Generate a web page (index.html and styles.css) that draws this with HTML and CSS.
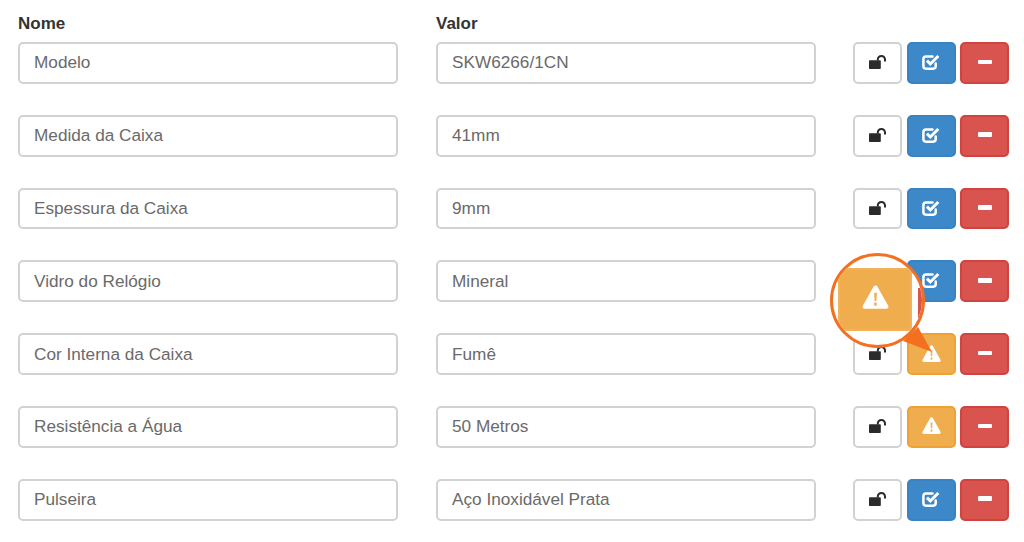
FILE: index.html
```html
<!DOCTYPE html>
<html lang="pt">
<head>
<meta charset="utf-8">
<title>Atributos</title>
<link rel="stylesheet" href="styles.css">
</head>
<body>
<svg class="defs" width="0" height="0" aria-hidden="true">
  <symbol id="i-lock" viewBox="0 0 17 14"><path d="M1 5.200h9.800c.6 0 1 .4 1 1V13c0 .6-.4 1-1 1H1c-.6 0-1-.4-1-1V6.200c0-.6.4-1 1-1z"/><path d="M7.800 5.600V4.500C7.800 2 9.800 0 12.400 0S17 2 17 4.500v2.100h-2V4.600c0-1.400-1.100-2.600-2.600-2.600s-2.600 1.200-2.600 2.600v1z"/></symbol>
  <symbol id="i-check" viewBox="0 0 18 16"><path fill="none" stroke="currentColor" stroke-width="2.500" stroke-linecap="round" d="M13.700 9.500v2.600c0 1.500-1 2.600-2.500 2.600H4c-1.500 0-2.600-1.100-2.600-2.600V5.200c0-1.500 1.100-2.600 2.600-2.600h6.500"/><path fill="none" stroke="currentColor" stroke-width="3" d="M4.900 6.600l3.400 3.400 8-8"/></symbol>
  <symbol id="i-warn" viewBox="0 0 20 18"><path fill-rule="evenodd" d="M10 .3c.6 0 1.100.3 1.400.8l8.100 14.500c.6 1.100-.1 2.300-1.300 2.300H1.800C.6 17.900-.1 16.700.5 15.600L8.600 1.100C8.900.6 9.400.3 10 .3zM9 5.800l.3 6.200h1.400l.3-6.200zM9.100 13.200v2.400h1.800v-2.400z"/></symbol>
</svg>
<form class="sheet">
  <div class="row head">
    <div class="name">Nome</div>
    <div class="name">Valor</div>
    <div></div>
  </div>
  <div class="row">
    <div class="field">Modelo</div>
    <div class="field">SKW6266/1CN</div>
    <div class="actions">
      <span class="btn plain"><svg class="ic-lock"><use href="#i-lock"/></svg></span>
      <span class="btn blue"><svg class="ic-check"><use href="#i-check"/></svg></span>
      <span class="btn red"><i class="minus"></i></span>
    </div>
  </div>
  <div class="row">
    <div class="field">Medida da Caixa</div>
    <div class="field">41mm</div>
    <div class="actions">
      <span class="btn plain"><svg class="ic-lock"><use href="#i-lock"/></svg></span>
      <span class="btn blue"><svg class="ic-check"><use href="#i-check"/></svg></span>
      <span class="btn red"><i class="minus"></i></span>
    </div>
  </div>
  <div class="row">
    <div class="field">Espessura da Caixa</div>
    <div class="field">9mm</div>
    <div class="actions">
      <span class="btn plain"><svg class="ic-lock"><use href="#i-lock"/></svg></span>
      <span class="btn blue"><svg class="ic-check"><use href="#i-check"/></svg></span>
      <span class="btn red"><i class="minus"></i></span>
    </div>
  </div>
  <div class="row">
    <div class="field">Vidro do Relógio</div>
    <div class="field">Mineral</div>
    <div class="actions">
      <span class="btn plain"><svg class="ic-lock"><use href="#i-lock"/></svg></span>
      <span class="btn blue"><svg class="ic-check"><use href="#i-check"/></svg></span>
      <span class="btn red"><i class="minus"></i></span>
    </div>
  </div>
  <div class="row">
    <div class="field">Cor Interna da Caixa</div>
    <div class="field">Fumê</div>
    <div class="actions">
      <span class="btn plain"><svg class="ic-lock"><use href="#i-lock"/></svg></span>
      <span class="btn amber"><svg class="ic-warn"><use href="#i-warn"/></svg></span>
      <span class="btn red"><i class="minus"></i></span>
    </div>
  </div>
  <div class="row">
    <div class="field">Resistência a Água</div>
    <div class="field">50 Metros</div>
    <div class="actions">
      <span class="btn plain"><svg class="ic-lock"><use href="#i-lock"/></svg></span>
      <span class="btn amber"><svg class="ic-warn"><use href="#i-warn"/></svg></span>
      <span class="btn red"><i class="minus"></i></span>
    </div>
  </div>
  <div class="row">
    <div class="field">Pulseira</div>
    <div class="field">Aço Inoxidável Prata</div>
    <div class="actions">
      <span class="btn plain"><svg class="ic-lock"><use href="#i-lock"/></svg></span>
      <span class="btn blue"><svg class="ic-check"><use href="#i-check"/></svg></span>
      <span class="btn red"><i class="minus"></i></span>
    </div>
  </div>
</form>
<div class="callout">
  <svg class="pointer" viewBox="0 0 40 40"><path d="M3 20L18 6L32 31z"/></svg>
  <div class="lens">
    <div class="sliver"></div>
    <div class="big"><svg class="ic-big"><use href="#i-warn"/></svg></div>
  </div>
</div>
</body>
</html>
```
FILE: styles.css
```css
* { box-sizing: border-box; }
html, body { margin: 0; padding: 0; background: #fff; }
body {
  width: 1024px;
  height: 542px;
  overflow: hidden;
  position: relative;
  font-family: "Liberation Sans", Arial, sans-serif;
}
.defs { position: absolute; }
.sheet {
  padding: 13px 15px 0 18px;
  display: flex;
  flex-direction: column;
  gap: 30.900px;
}
.row {
  display: grid;
  grid-template-columns: 380px 380px 155px;
  column-gap: 38px;
  height: 41.900px;
}
.head {
  height: 18px;
  margin-bottom: -19.900px;
}
.name {
  font-size: 17px;
  font-weight: 700;
  line-height: 22px;
  color: #333;
}
.field {
  border: 2px solid #d2d2d2;
  border-radius: 5px;
  padding: 0 14px;
  display: flex;
  align-items: center;
  font-size: 17.200px;
  color: #6a6a6a;
  background: #fff;
}
.actions { display: flex; gap: 4.750px; margin-left: -0.600px; }
.btn {
  width: 48.700px;
  height: 100%;
  border-radius: 5px;
  border: 2px solid;
  display: flex;
  align-items: center;
  justify-content: center;
  padding-bottom: 2px;
}
.plain { background: #fff; border-color: #d2d2d2; color: #2b2b2b; }
.blue { background: #3d88c9; border-color: #3a82c0; color: #fff; }
.red { background: #d9534f; border-color: #d0433f; color: #fff; }
.amber { background: #f0ad4e; border-color: #eea236; color: #fff; }
.ic-lock { width: 17px; height: 14px; fill: currentColor; }
.ic-check { width: 18px; height: 16px; }
.ic-warn { width: 19px; height: 17px; fill: currentColor; }
.minus { display: block; width: 14px; height: 4.500px; background: #fff; border-radius: 1px; }
.callout {
  position: absolute;
  left: 830px;
  top: 253px;
  width: 95px;
  height: 95px;
}
.pointer {
  position: absolute;
  left: 70px;
  top: 68px;
  width: 40px;
  height: 40px;
  fill: #f37021;
}
.lens {
  position: absolute;
  inset: 0;
  border-radius: 50%;
  border: 3px solid #f37021;
  background: #fff;
  overflow: hidden;
}
.sliver {
  position: absolute;
  left: 85px;
  top: 32px;
  width: 8px;
  height: 30px;
  background: #d9534f;
}
.big {
  position: absolute;
  left: 5px;
  top: 12px;
  width: 74px;
  height: 63px;
  border-radius: 3px;
  background: #f0ad4e;
  border: 2px solid #f2b25c;
  display: flex;
  align-items: center;
  justify-content: center;
  color: #fff;
  padding-bottom: 5px;
}
.ic-big { width: 27px; height: 24px; fill: currentColor; }
```
